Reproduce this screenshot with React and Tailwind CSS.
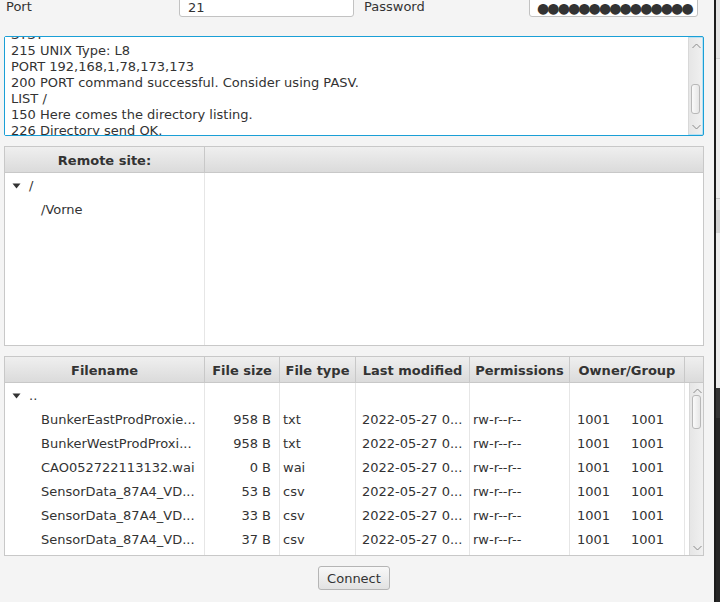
import React from "react";

const font = { fontFamily: '"DejaVu Sans", "Liberation Sans", sans-serif' };

function Tri() {
  return (
    <svg width="9" height="6" viewBox="0 0 9 6" className="block">
      <path d="M0.5 0.5 L8.5 0.5 L4.5 5.5 Z" fill="#333" />
    </svg>
  );
}

function Chevron({ up }) {
  return (
    <svg width="9" height="6" viewBox="0 0 9 6" className="block">
      <path d={up ? "M0.5 5 L4.5 1 L8.5 5" : "M0.5 1 L4.5 5 L8.5 1"} fill="none" stroke="#8a8a8a" strokeWidth="1" />
    </svg>
  );
}

function VScroll({ thumbTop, thumbH }) {
  return (
    <div className="relative h-full w-[14px] border-l border-[#d8d8d8] bg-gradient-to-r from-[#e6e6e6] to-[#f0f0f0]">
      <div className="absolute left-[3px] top-[5px]"><Chevron up /></div>
      <div
        className="absolute left-[2px] w-[9px] rounded-[3px] border border-[#b8b8b8] bg-gradient-to-r from-[#fafafa] to-[#e6e6e6]"
        style={{ top: thumbTop, height: thumbH }}
      />
      <div className="absolute left-[3px] bottom-[4px]"><Chevron /></div>
    </div>
  );
}

const logLines = [
  "SYST",
  "215 UNIX Type: L8",
  "PORT 192,168,1,78,173,173",
  "200 PORT command successful. Consider using PASV.",
  "LIST /",
  "150 Here comes the directory listing.",
  "226 Directory send OK.",
];

const cols = [
  { name: "Filename", w: 200 },
  { name: "File size", w: 75 },
  { name: "File type", w: 76 },
  { name: "Last modified", w: 114 },
  { name: "Permissions", w: 100 },
  { name: "Owner/Group", w: 115 },
];

const files = [
  ["BunkerEastProdProxie...", "958 B", "txt"],
  ["BunkerWestProdProxi...", "958 B", "txt"],
  ["CAO052722113132.wai", "0 B", "wai"],
  ["SensorData_87A4_VD...", "53 B", "csv"],
  ["SensorData_87A4_VD...", "33 B", "csv"],
  ["SensorData_87A4_VD...", "37 B", "csv"],
];

function HeaderCell({ children, w, last }) {
  return (
    <div
      className={`flex h-full shrink-0 items-center justify-center pt-[2px] text-[13px] font-bold text-[#333] ${last ? "" : "border-r border-[#c8c8c8]"}`}
      style={{ width: w }}
    >
      {children}
    </div>
  );
}

export default function App() {
  return (
    <div className="flex h-[602px] w-[720px] overflow-hidden bg-[#f4f4f4] text-[#333]" style={font}>
      <div className="flex w-[714px] shrink-0 flex-col">
        {/* top row */}
        <div className="mt-[-8px] flex h-[25px] items-center text-[13px]">
          <div className="w-[179px] pl-[6px] pt-[5px]">Port</div>
          <div className="flex h-[25px] w-[175px] items-center rounded-[3px] border border-[#c2c2c2] bg-white pl-[8px] pt-[6px]">21</div>
          <div className="w-[175px] pl-[10px] pt-[5px]">Password</div>
          <div className="flex h-[25px] w-[169px] items-center overflow-hidden whitespace-nowrap rounded-[3px] border border-[#c2c2c2] bg-white pl-[7px] pt-[7px] text-[14px] tracking-[-1.9px]">
            ●●●●●●●●●●●●●●●
          </div>
        </div>

        {/* log text area */}
        <div className="ml-[4px] mt-[19px] flex h-[100px] w-[700px] rounded-[2px] border border-[#1a9fd6] shadow-[inset_0_0_0_1px_#b8e1f3]">
          <div className="relative flex-1 overflow-hidden bg-white">
            <div className="mt-[-10px] pl-[6px] text-[13px] leading-[16px]">
              {logLines.map((l, i) => (
                <div key={i} className="whitespace-nowrap">{l}</div>
              ))}
            </div>
          </div>
          <div className="h-full py-[1px] pr-[1px]">
            <VScroll thumbTop={46} thumbH={30} />
          </div>
        </div>

        {/* remote site tree table */}
        <div className="ml-[4px] mt-[10px] flex h-[200px] w-[700px] flex-col border border-[#c8c8c8] bg-white">
          <div className="flex h-[26px] shrink-0 border-b border-[#c8c8c8] bg-gradient-to-b from-[#efefef] to-[#dbdbdb]">
            <HeaderCell w={200}>Remote site:</HeaderCell>
            <HeaderCell w={498} last />
          </div>
          <div className="flex flex-1">
            <div className="w-[200px] border-r border-[#e6e6e6] text-[13px]">
              <div className="flex h-[24px] items-center pt-[1px]">
                <div className="ml-[7px] w-[17px]"><Tri /></div>
                <span className="pt-[1px]">/</span>
              </div>
              <div className="flex h-[24px] items-center pl-[36px] pt-[2px]">/Vorne</div>
            </div>
            <div className="flex-1" />
          </div>
        </div>

        {/* file table */}
        <div className="ml-[4px] mt-[10px] flex h-[200px] w-[700px] flex-col border border-[#c8c8c8] bg-white">
          <div className="flex h-[26px] shrink-0 border-b border-[#c8c8c8] bg-gradient-to-b from-[#efefef] to-[#dbdbdb]">
            {cols.map((c) => (
              <HeaderCell key={c.name} w={c.w}>{c.name}</HeaderCell>
            ))}
            <HeaderCell w={18} last />
          </div>
          <div className="flex flex-1 overflow-hidden">
            <div className="flex flex-1 text-[13px]">
              <div className="w-[200px] shrink-0 border-r border-[#e6e6e6]">
                <div className="flex h-[24px] items-center pt-[1px]">
                  <div className="ml-[7px] w-[17px]"><Tri /></div>
                  <span className="pt-[1px]">..</span>
                </div>
                {files.map((f, i) => (
                  <div key={i} className="flex h-[24px] items-center whitespace-nowrap pl-[36px] pt-[2px]">{f[0]}</div>
                ))}
              </div>
              <div className="w-[75px] shrink-0 border-r border-[#e6e6e6]">
                <div className="h-[24px]" />
                {files.map((f, i) => (
                  <div key={i} className="flex h-[24px] items-center justify-end pr-[8px] pt-[2px]">{f[1]}</div>
                ))}
              </div>
              <div className="w-[76px] shrink-0 border-r border-[#e6e6e6]">
                <div className="h-[24px]" />
                {files.map((f, i) => (
                  <div key={i} className="flex h-[24px] items-center pl-[3px] pt-[2px]">{f[2]}</div>
                ))}
              </div>
              <div className="w-[114px] shrink-0 border-r border-[#e6e6e6]">
                <div className="h-[24px]" />
                {files.map((f, i) => (
                  <div key={i} className="flex h-[24px] items-center whitespace-nowrap pl-[6px] pt-[2px]">2022-05-27 0...</div>
                ))}
              </div>
              <div className="w-[100px] shrink-0 border-r border-[#e6e6e6]">
                <div className="h-[24px]" />
                {files.map((f, i) => (
                  <div key={i} className="flex h-[24px] items-center pl-[3px] pt-[2px]">rw-r--r--</div>
                ))}
              </div>
              <div className="w-[115px] shrink-0 border-r border-[#e6e6e6]">
                <div className="h-[24px]" />
                {files.map((f, i) => (
                  <div key={i} className="flex h-[24px] items-center pl-[7px] pt-[2px]">
                    <span className="w-[54px]">1001</span>
                    <span>1001</span>
                  </div>
                ))}
              </div>
              <div className="flex-1" />
            </div>
            <VScroll thumbTop={12} thumbH={34} />
          </div>
        </div>

        {/* connect button */}
        <div className="mt-[10px] flex justify-center pr-[6px]">
          <div className="flex h-[24px] w-[72px] items-center justify-center rounded-[3px] border border-[#b5b5b5] bg-gradient-to-b from-[#f8f8f8] to-[#e2e2e2] pt-[1px] text-[13px]">
            Connect
          </div>
        </div>
      </div>

      {/* background window edge */}
      <div className="flex w-[6px] flex-col border-l-2 border-[#1c1c1c]">
        <div className="h-[58px] bg-[#e4e4e4]" />
        <div className="h-[140px] border-t border-[#cfcfcf] bg-[#ececec]" />
        <div className="h-[12px] border-t border-[#c4c4c4] bg-[#e8e8e8]" />
        <div className="h-[23px] bg-[#d2d2d2]" />
        <div className="h-[155px] bg-[#ececec]" />
        <div className="h-[30px] bg-[#343434]" />
        <div className="flex-1 bg-[#262626]" />
      </div>
    </div>
  );
}
